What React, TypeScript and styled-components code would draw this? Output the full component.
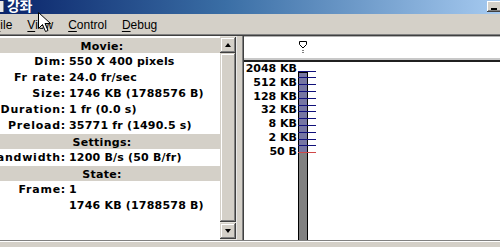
import styled, { createGlobalStyle } from "styled-components";

const GlobalStyle = createGlobalStyle`
  html, body {
    margin: 0;
    padding: 0;
    overflow: hidden;
    background: #d4d0c8;
  }
`;

const Window = styled.div`
  position: relative;
  width: 500px;
  height: 247px;
  display: flex;
  flex-direction: column;
  background: #d4d0c8;
  overflow: hidden;
`;

const TitleBar = styled.div`
  height: 14px;
  flex: none;
  display: flex;
  align-items: flex-end;
  background: linear-gradient(to right, #0a246a 0%, #3a6ea5 45%, #a6caf0 100%);
  padding-bottom: 2px;
  box-sizing: border-box;
`;

const TitleIcon = styled.div`
  width: 3px;
  height: 11px;
  background: #e8e8e8;
  border-right: 1px solid #808080;
  align-self: flex-start;
  margin-top: 1px;
`;

const TitleText = styled.span`
  margin-left: 3px;
  color: #fff;
  font-family: "Noto Sans CJK KR", sans-serif;
  font-weight: 700;
  font-size: 14px;
  line-height: 14px;
  letter-spacing: -0.5px;
`;

const TitleButtons = styled.div`
  margin-left: auto;
  align-self: flex-start;
  margin-top: 1px;
  margin-right: -3px;
`;

const CaptionButton = styled.div`
  width: 16px;
  height: 11px;
  background: #d4d0c8;
  box-shadow: inset -1px -1px #404040, inset 1px 1px #fff, inset -2px -2px #808080;
  display: flex;
  align-items: flex-end;
  padding: 0 0 2px 4px;
  box-sizing: border-box;
`;

const MinGlyph = styled.div`
  width: 6px;
  height: 2px;
  background: #000;
`;

const MenuBar = styled.div`
  height: 20px;
  flex: none;
  display: flex;
  align-items: center;
  gap: 15px;
  font-family: "Liberation Sans", Arial, sans-serif;
  font-size: 12px;
  color: #000;
`;

const MenuItem = styled.span<{ $cut?: boolean }>`
  margin-left: ${(p) => (p.$cut ? "-7px" : "0")};
  padding-top: 2px;
`;

const Key = styled.span`
  text-decoration: underline;
  text-underline-offset: 2px;
`;

const Content = styled.div`
  flex: 1;
  display: flex;
  min-height: 0;
  border-top: 1px solid #808080;
  box-shadow: inset 0 1px #404040;
  padding-top: 1px;
`;

const InfoPane = styled.div`
  display: flex;
  background: #fff;
  flex: none;
`;

const InfoList = styled.div`
  width: 220px;
  overflow: hidden;
  padding-top: 2px;
  font-family: "DejaVu Sans", Verdana, sans-serif;
  font-weight: 700;
  font-size: 11px;
  line-height: 16px;
  color: #000;
`;

const SectionHeader = styled.div`
  height: 16px;
  background: #d4d0c8;
  text-align: center;
  padding-right: 16px;
  border-bottom: 1px solid #fff;
  box-sizing: border-box;
  line-height: 17px;
  letter-spacing: 0.3px;
`;

const InfoRow = styled.div`
  display: grid;
  grid-template-columns: 66px 1fr;
  height: 16px;
`;

const Label = styled.span`
  display: flex;
  justify-content: flex-end;
  white-space: nowrap;
  letter-spacing: 0.75px;
`;

const Value = styled.span`
  padding-left: 3px;
  white-space: nowrap;
  letter-spacing: 0.2px;
`;

const ScrollBar = styled.div`
  width: 16px;
  display: flex;
  flex-direction: column;
  padding: 1px 0 1px;
  background: #e6e4df;
  box-sizing: border-box;
`;

const ScrollButton = styled.div`
  height: 16px;
  flex: none;
  background: #d4d0c8;
  box-shadow: inset -1px -1px #404040, inset 1px 1px #d4d0c8, inset -2px -2px #808080, inset 2px 2px #fff;
  display: flex;
  align-items: center;
  justify-content: center;
`;

const Thumb = styled.div`
  flex: 1;
  margin-bottom: 1px;
  background: #d4d0c8;
  box-shadow: inset -1px -1px #404040, inset 1px 1px #d4d0c8, inset -2px -2px #808080, inset 2px 2px #fff;
`;

const Arrow = styled.div<{ $down?: boolean }>`
  width: 0;
  height: 0;
  border-left: 3.5px solid transparent;
  border-right: 3.5px solid transparent;
  ${(p) =>
    p.$down ? "border-top: 4px solid #000;" : "border-bottom: 4px solid #000;"}
`;

const Splitter = styled.div`
  width: 6px;
  flex: none;
  background: #d4d0c8;
  border-left: 1px solid #e8e8e8;
  box-sizing: border-box;
`;

const GraphPane = styled.div`
  flex: 1;
  display: flex;
  flex-direction: column;
  background: #fff;
  border-left: 1px solid #808080;
  box-shadow: inset 1px 0 #404040;
  padding-left: 1px;
`;

const Timeline = styled.div`
  height: 19px;
  flex: none;
  border-top: 1px solid #b0b0b0;
  border-bottom: 2px solid #c8c8c8;
  padding-left: 55px;
  padding-top: 2px;
  box-sizing: content-box;
`;

const Graph = styled.div`
  flex: 1;
  display: flex;
  border-top: 2px solid #202020;
`;

const ScaleLabels = styled.div`
  width: 54px;
  flex: none;
  text-align: right;
  padding-right: 1px;
  box-sizing: border-box;
  font-family: "DejaVu Sans", Verdana, sans-serif;
  font-weight: 700;
  font-size: 11px;
  line-height: 13.8px;
  color: #000;
`;

const BottomEdge = styled.div`
  height: 6px;
  flex: none;
  border-top: 1px solid #808080;
  box-shadow: inset 0 1px #fff;
  background: #d4d0c8;
`;

const Pointer = styled.svg`
  position: absolute;
  left: 38px;
  top: 12px;
  pointer-events: none;
`;

const movie = [
  ["Dim:", "550 X 400 pixels"],
  ["Fr rate:", "24.0 fr/sec"],
  ["Size:", "1746 KB (1788576 B)"],
  ["Duration:", "1 fr (0.0 s)"],
  ["Preload:", "35771 fr (1490.5 s)"],
];

const scale = ["2048 KB", "512 KB", "128 KB", "32 KB", "8 KB", "2 KB", "50 B"];

function BarChart() {
  const ticks = Array.from({ length: 13 }, (_, k) => 8.5 + k * 6.8);
  return (
    <svg width="22" height="181" viewBox="0 0 22 181">
      <rect x="0.5" y="10.5" width="9" height="172" fill="#808080" stroke="#000" />
      <rect x="1" y="11" width="8" height="79" fill="#7676a2" />
      {ticks.map((y, k) => (
        <line
          key={k}
          x1="0"
          x2="18"
          y1={Math.round(y) + 0.5}
          y2={Math.round(y) + 0.5}
          stroke={k === 12 ? "#d04848" : "#10107a"}
          strokeWidth="1"
        />
      ))}
    </svg>
  );
}

export default function App() {
  return (
    <>
      <GlobalStyle />
      <Window>
        <TitleBar>
          <TitleIcon />
          <TitleText>강좌</TitleText>
          <TitleButtons>
            <CaptionButton>
              <MinGlyph />
            </CaptionButton>
          </TitleButtons>
        </TitleBar>

        <MenuBar>
          <MenuItem $cut>
            <Key>F</Key>ile
          </MenuItem>
          <MenuItem>
            <Key>V</Key>iew
          </MenuItem>
          <MenuItem>
            <Key>C</Key>ontrol
          </MenuItem>
          <MenuItem>
            <Key>D</Key>ebug
          </MenuItem>
        </MenuBar>

        <Content>
          <InfoPane>
            <InfoList>
              <SectionHeader>Movie:</SectionHeader>
              {movie.map(([l, v]) => (
                <InfoRow key={l}>
                  <Label>{l}</Label>
                  <Value>{v}</Value>
                </InfoRow>
              ))}
              <SectionHeader>Settings:</SectionHeader>
              <InfoRow>
                <Label>Bandwidth:</Label>
                <Value>1200 B/s (50 B/fr)</Value>
              </InfoRow>
              <SectionHeader>State:</SectionHeader>
              <InfoRow>
                <Label>Frame:</Label>
                <Value>1</Value>
              </InfoRow>
              <InfoRow>
                <Label />
                <Value>1746 KB (1788578 B)</Value>
              </InfoRow>
            </InfoList>
            <ScrollBar>
              <ScrollButton>
                <Arrow />
              </ScrollButton>
              <Thumb />
              <ScrollButton>
                <Arrow $down />
              </ScrollButton>
            </ScrollBar>
          </InfoPane>

          <Splitter />

          <GraphPane>
            <Timeline>
              <svg width="9" height="12" viewBox="0 0 9 12">
                <path d="M0.5 0.5 H7.5 V3.5 L4 7 L0.5 3.5 Z" fill="#fff" stroke="#000" />
                <rect x="3.5" y="9" width="1" height="1" fill="#000" />
                <rect x="3.5" y="11" width="1" height="1" fill="#000" />
              </svg>
            </Timeline>
            <Graph>
              <ScaleLabels>
                {scale.map((s) => (
                  <div key={s}>{s}</div>
                ))}
              </ScaleLabels>
              <BarChart />
            </Graph>
          </GraphPane>
        </Content>

        <BottomEdge />

        <Pointer width="14" height="21" viewBox="0 0 14 21">
          <path
            d="M0.5 0.5 V16.5 L4.5 12.5 L7.5 19.5 L10 18.5 L7 11.5 H12.5 Z"
            fill="#fff"
            stroke="#000"
            strokeWidth="1"
          />
        </Pointer>
      </Window>
    </>
  );
}
